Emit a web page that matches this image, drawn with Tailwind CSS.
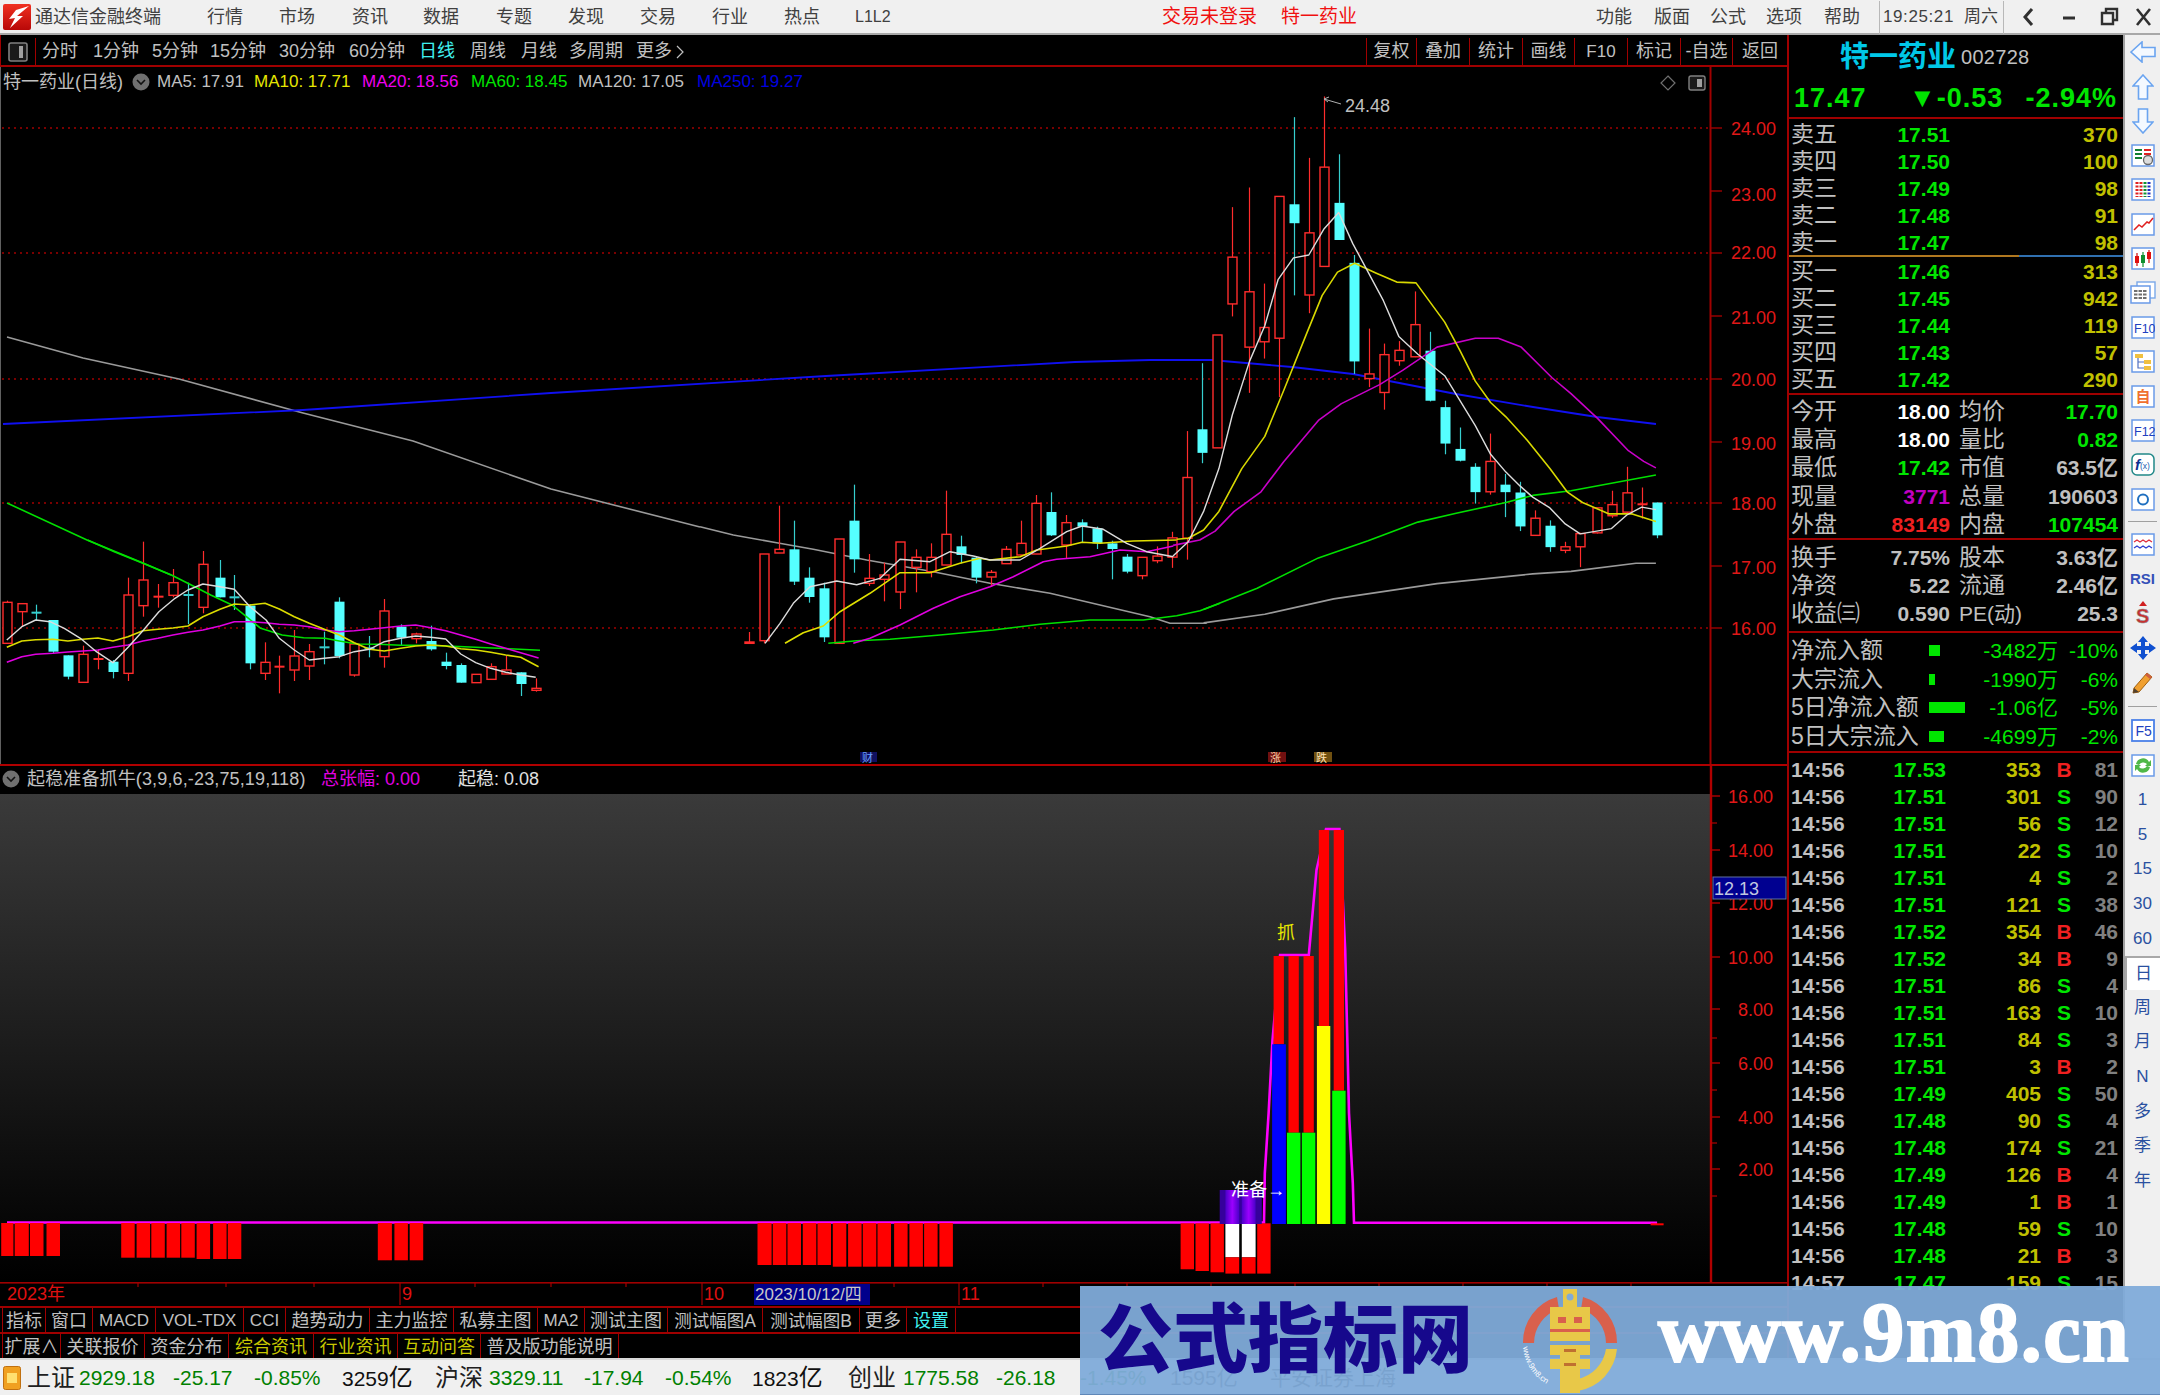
<!DOCTYPE html>
<html lang="zh">
<head>
<meta charset="utf-8">
<script src="https://cdn.jsdelivr.net/npm/@tailwindcss/browser@4"></script>
<title>通达信金融终端</title>
</head>
<body class="bg-black">
<div class="relative flex h-[1395px] w-[2160px] flex-col overflow-hidden bg-black text-[18px] text-[#c0c0c0] [font-family:'Liberation_Sans','Noto_Sans_CJK_SC',sans-serif]">

  <!-- menu bar -->
  <header class="flex h-[35px] shrink-0 items-center border-b-2 border-[#a8a8a8] bg-[#f0f0f0] pt-[1px] text-[18px] text-[#404040]">
    <svg class="ml-[3px] h-[26px] w-[28px] shrink-0" viewBox="0 0 28 26"><defs><linearGradient id="lg" x1="0" y1="0" x2="0" y2="1"><stop offset="0" stop-color="#f03020"/><stop offset="1" stop-color="#b80808"/></linearGradient></defs><rect width="28" height="26" rx="2" fill="url(#lg)"/><path d="M26 2 L13 6 L6 15 L12 14 L7 24 L20 12 L14 12 Z" fill="#fff"/></svg>
    <span class="ml-[4px] w-[172px] whitespace-nowrap">通达信金融终端</span>
    <span class="w-[72px]">行情</span><span class="w-[73px]">市场</span><span class="w-[71px]">资讯</span><span class="w-[73px]">数据</span><span class="w-[72px]">专题</span><span class="w-[72px]">发现</span><span class="w-[72px]">交易</span><span class="w-[72px]">行业</span><span class="w-[71px]">热点</span>
    <span class="w-[307px] text-[16px]">L1L2</span>
    <span class="w-[119px] whitespace-nowrap text-[19px] text-[#f01010]">交易未登录</span>
    <span class="w-[315px] whitespace-nowrap text-[19px] text-[#f01010]">特一药业</span>
    <span class="w-[58px]">功能</span><span class="w-[56px]">版面</span><span class="w-[56px]">公式</span><span class="w-[58px]">选项</span><span class="w-[55px]">帮助</span>
    <span class="flex h-[33px] w-[125px] items-center gap-[10px] border-x border-[#b8b8b8] pl-[3px] text-[17px]"><span class="tracking-[0.6px]">19:25:21</span><span class="whitespace-nowrap">周六</span></span>
    <svg class="ml-[16px] h-[22px] w-[132px] shrink-0" viewBox="0 0 132 22" fill="none" stroke="#303030" stroke-width="3"><path d="M12 3 L5 11 L12 19"/><path d="M43 12 H55" /><path d="M82 7 H93 V18 H82 Z M86 7 V3 H97 V14 H93" stroke-width="2.4"/><path d="M117 3 L130 19 M130 3 L117 19" stroke-width="2.6"/></svg>
  </header>

  <div class="flex min-h-0 flex-1">
    <!-- left column -->
    <div class="flex w-[1787px] shrink-0 flex-col">
      <!-- period toolbar -->
      <div class="flex h-[32px] shrink-0 items-center border-b-2 border-l border-[#a00000] pt-[3px]">
        <span class="flex h-full w-[35px] shrink-0 items-center justify-center border-r border-[#a00000]"><svg class="h-[20px] w-[20px]" viewBox="0 0 20 20"><rect x="1" y="1" width="18" height="18" rx="2" fill="#1a1a1a" stroke="#808080" stroke-width="1.6"/><rect x="11" y="4" width="4" height="12" fill="#a0a0a0"/></svg></span>
        <span class="ml-[6px] w-[51px] whitespace-nowrap">分时</span><span class="w-[59px] whitespace-nowrap">1分钟</span><span class="w-[58px] whitespace-nowrap">5分钟</span><span class="w-[69px] whitespace-nowrap">15分钟</span><span class="w-[70px] whitespace-nowrap">30分钟</span><span class="w-[70px] whitespace-nowrap">60分钟</span><span class="w-[51px] whitespace-nowrap text-[#40f0f0]">日线</span><span class="w-[51px] whitespace-nowrap">周线</span><span class="w-[48px] whitespace-nowrap">月线</span><span class="w-[67px] whitespace-nowrap">多周期</span><span class="flex w-[52px] items-center gap-[4px] whitespace-nowrap">更多<svg class="h-[14px] w-[8px]" viewBox="0 0 8 14" fill="none" stroke="#c0c0c0" stroke-width="1.2"><path d="M1 1 L7 7 L1 13"/></svg></span>
        <div class="ml-auto flex h-full text-center">
          <span class="flex w-[50px] items-center justify-center border-l border-[#a00000]">复权</span><span class="flex w-[53px] items-center justify-center border-l border-[#a00000]">叠加</span><span class="flex w-[53px] items-center justify-center border-l border-[#a00000]">统计</span><span class="flex w-[52px] items-center justify-center border-l border-[#a00000]">画线</span><span class="flex w-[53px] items-center justify-center border-l border-[#a00000] text-[17px]">F10</span><span class="flex w-[53px] items-center justify-center border-l border-[#a00000]">标记</span><span class="flex w-[52px] items-center justify-center border-l border-[#a00000]">-自选</span><span class="flex w-[55px] items-center justify-center border-l border-[#a00000]">返回</span>
        </div>
      </div>

      <!-- price chart -->
      <div class="relative h-[697px] shrink-0 border-l border-[#606060]">
        <svg id="main" class="absolute left-[-1px] top-0 h-[697px] w-[1787px]" viewBox="0 67 1787 697" font-size="18"></svg>
        <div class="absolute left-[2px] top-[4px] flex h-[22px] items-center whitespace-nowrap text-[17px]">
          <span class="w-[129px] text-[18px]">特一药业(日线)</span>
          <svg class="mr-[7px] h-[18px] w-[18px]" viewBox="0 0 18 18"><circle cx="9" cy="9" r="8.5" fill="#707070"/><path d="M5 7 L9 11 L13 7" fill="none" stroke="#111" stroke-width="1.6"/></svg>
          <span class="w-[97px]">MA5: 17.91</span><span class="w-[108px] text-[#e6e600]">MA10: 17.71</span><span class="w-[109px] text-[#f000f0]">MA20: 18.56</span><span class="w-[107px] text-[#00e600]">MA60: 18.45</span><span class="w-[119px]">MA120: 17.05</span><span class="w-[110px] text-[#0000e0]">MA250: 19.27</span>
        </div>
      </div>

      <!-- indicator title -->
      <div class="flex h-[30px] shrink-0 items-center border-t-2 border-[#b00000] pb-[2px] whitespace-nowrap">
        <svg class="ml-[2px] mr-[7px] h-[18px] w-[18px]" viewBox="0 0 18 18"><circle cx="9" cy="9" r="8.5" fill="#707070"/><path d="M5 7 L9 11 L13 7" fill="none" stroke="#111" stroke-width="1.6"/></svg>
        <span class="w-[294px] tracking-[0.14px]">起稳准备抓牛(3,9,6,-23,75,19,118)</span>
        <span class="w-[137px] text-[#e000e0]">总张幅: 0.00</span>
        <span class="text-[#e0e0e0]">起稳: 0.08</span>
      </div>

      <!-- indicator chart -->
      <div class="relative h-[488px] shrink-0">
        <div class="absolute left-0 top-0 h-full w-[1710px] bg-[linear-gradient(180deg,#3a3a3a_0%,#060606_88%,#000000_100%)]"></div>
        <svg id="sub" class="absolute left-0 top-0 h-[488px] w-[1787px] overflow-visible" viewBox="0 794 1787 488" font-size="18"></svg>
      </div>

      <!-- time axis -->
      <svg class="h-[24px] w-[1787px] shrink-0" viewBox="0 1282 1787 24" font-size="18">
        <rect x="0" y="1282" width="1787" height="1.6" fill="#a00000"/>
        <path d="M138 1283v4M226 1283v4M314 1283v4M400 1283v22M475 1283v4M551 1283v4M626 1283v4M702 1283v22M894 1283v4M959 1283v22M1043 1283v4M1127 1283v4M1211 1283v4M1295 1283v4M1379 1283v4M1463 1283v4M1547 1283v4M1631 1283v4" stroke="#a00000" stroke-width="1.2"/>
        <rect x="754" y="1284" width="116" height="21" fill="#00008c"/>
        <text x="7" y="1300" fill="#e01010">2023年</text>
        <text x="402" y="1300" fill="#e01010">9</text>
        <text x="704" y="1300" fill="#e01010">10</text>
        <text x="755" y="1300" fill="#c8c8c8" font-size="17">2023/10/12/四</text>
        <text x="961" y="1300" fill="#e01010">11</text>
      </svg>

      <!-- tabs -->
      <div class="flex h-[26px] shrink-0 border-t-2 border-[#a00000] pl-[2px] text-center whitespace-nowrap">
        <span class="w-[44px] border-x border-[#a00000]">指标</span><span class="w-[47px] border-r border-[#a00000]">窗口</span><span class="w-[63px] border-r border-[#a00000] text-[17px]">MACD</span><span class="w-[88px] border-r border-[#a00000] text-[17px]">VOL-TDX</span><span class="w-[42px] border-r border-[#a00000] text-[17px]">CCI</span><span class="w-[84px] border-r border-[#a00000]">趋势动力</span><span class="w-[84px] border-r border-[#a00000]">主力监控</span><span class="w-[84px] border-r border-[#a00000]">私募主图</span><span class="w-[47px] border-r border-[#a00000] text-[17px]">MA2</span><span class="w-[83px] border-r border-[#a00000]">测试主图</span><span class="w-[95px] border-r border-[#a00000] text-[17.5px]">测试幅图A</span><span class="w-[97px] border-r border-[#a00000] text-[17.5px]">测试幅图B</span><span class="w-[47px] border-r border-[#a00000]">更多</span><span class="w-[49px] border-r border-[#a00000] text-[#40f0f0]">设置</span>
      </div>
      <div class="flex h-[26px] shrink-0 border-t-2 border-[#a00000] pl-[2px] text-center whitespace-nowrap">
        <span class="w-[59px] border-x border-[#a00000]">扩展∧</span><span class="w-[84px] border-r border-[#a00000]">关联报价</span><span class="w-[84px] border-r border-[#a00000]">资金分布</span><span class="w-[85px] border-r border-[#a00000] text-[#c8c800]">综合资讯</span><span class="w-[84px] border-r border-[#a00000] text-[#c8c800]">行业资讯</span><span class="w-[83px] border-r border-[#a00000] text-[#c8c800]">互动问答</span><span class="w-[138px] border-r border-[#a00000]">普及版功能说明</span>
      </div>
    </div>

    <!-- quote panel -->
    <aside class="flex w-[336px] shrink-0 flex-col overflow-hidden border-l-2 border-[#a00000] text-[21px] font-bold leading-none text-[#c0c0c0]">
      <div class="flex h-[84px] shrink-0 flex-col border-b-2 border-[#a00000]">
        <div class="flex h-[44px] items-center pl-[51px]"><span class="w-[121px] whitespace-nowrap text-[29px] text-[#00c8e8]">特一药业</span><span class="text-[20px] font-normal tracking-[0.3px]">002728</span></div>
        <div class="flex h-[38px] items-center whitespace-nowrap text-[27px] tracking-[1px] text-[#00e600]"><span class="ml-[5px] w-[115px]">17.47</span><span class="w-[112px]">▼-0.53</span><span class="w-[96px] text-right">-2.94%</span></div>
      </div>

      <div class="h-[136px] shrink-0 pt-[2px]">
        <div class="flex h-[27px] items-center pl-[2px] pr-[5px]"><span class="w-[80px] text-[23px] font-normal">卖五</span><span class="w-[79px] text-right text-[#00e600]">17.51</span><span class="flex-1 text-right text-[#c0c000]">370</span></div>
        <div class="flex h-[27px] items-center pl-[2px] pr-[5px]"><span class="w-[80px] text-[23px] font-normal">卖四</span><span class="w-[79px] text-right text-[#00e600]">17.50</span><span class="flex-1 text-right text-[#c0c000]">100</span></div>
        <div class="flex h-[27px] items-center pl-[2px] pr-[5px]"><span class="w-[80px] text-[23px] font-normal">卖三</span><span class="w-[79px] text-right text-[#00e600]">17.49</span><span class="flex-1 text-right text-[#c0c000]">98</span></div>
        <div class="flex h-[27px] items-center pl-[2px] pr-[5px]"><span class="w-[80px] text-[23px] font-normal">卖二</span><span class="w-[79px] text-right text-[#00e600]">17.48</span><span class="flex-1 text-right text-[#c0c000]">91</span></div>
        <div class="flex h-[27px] items-center pl-[2px] pr-[5px]"><span class="w-[80px] text-[23px] font-normal">卖一</span><span class="w-[79px] text-right text-[#00e600]">17.47</span><span class="flex-1 text-right text-[#c0c000]">98</span></div>
      </div>
      <div class="flex h-[2px] shrink-0"><span class="w-[230px] bg-[#b07820]"></span><span class="flex-1 bg-[#3070b0]"></span></div>
      <div class="h-[138px] shrink-0 border-b-2 border-[#a00000] pt-[1px]">
        <div class="flex h-[27px] items-center pl-[2px] pr-[5px]"><span class="w-[80px] text-[23px] font-normal">买一</span><span class="w-[79px] text-right text-[#00e600]">17.46</span><span class="flex-1 text-right text-[#c0c000]">313</span></div>
        <div class="flex h-[27px] items-center pl-[2px] pr-[5px]"><span class="w-[80px] text-[23px] font-normal">买二</span><span class="w-[79px] text-right text-[#00e600]">17.45</span><span class="flex-1 text-right text-[#c0c000]">942</span></div>
        <div class="flex h-[27px] items-center pl-[2px] pr-[5px]"><span class="w-[80px] text-[23px] font-normal">买三</span><span class="w-[79px] text-right text-[#00e600]">17.44</span><span class="flex-1 text-right text-[#c0c000]">119</span></div>
        <div class="flex h-[27px] items-center pl-[2px] pr-[5px]"><span class="w-[80px] text-[23px] font-normal">买四</span><span class="w-[79px] text-right text-[#00e600]">17.43</span><span class="flex-1 text-right text-[#c0c000]">57</span></div>
        <div class="flex h-[27px] items-center pl-[2px] pr-[5px]"><span class="w-[80px] text-[23px] font-normal">买五</span><span class="w-[79px] text-right text-[#00e600]">17.42</span><span class="flex-1 text-right text-[#c0c000]">290</span></div>
      </div>

      <div class="h-[145px] shrink-0 border-b-2 border-[#a00000] pt-[2px]">
        <div class="flex h-[28.4px] items-center pl-[2px] pr-[5px]"><span class="w-[80px] text-[23px] font-normal">今开</span><span class="w-[79px] text-right text-white">18.00</span><span class="ml-[9px] text-[23px] font-normal">均价</span><span class="flex-1 text-right text-[#00e600]">17.70</span></div>
        <div class="flex h-[28.4px] items-center pl-[2px] pr-[5px]"><span class="w-[80px] text-[23px] font-normal">最高</span><span class="w-[79px] text-right text-white">18.00</span><span class="ml-[9px] text-[23px] font-normal">量比</span><span class="flex-1 text-right text-[#00e600]">0.82</span></div>
        <div class="flex h-[28.4px] items-center pl-[2px] pr-[5px]"><span class="w-[80px] text-[23px] font-normal">最低</span><span class="w-[79px] text-right text-[#00e600]">17.42</span><span class="ml-[9px] text-[23px] font-normal">市值</span><span class="flex-1 text-right">63.5亿</span></div>
        <div class="flex h-[28.4px] items-center pl-[2px] pr-[5px]"><span class="w-[80px] text-[23px] font-normal">现量</span><span class="w-[79px] text-right text-[#c000c0]">3771</span><span class="ml-[9px] text-[23px] font-normal">总量</span><span class="flex-1 text-right">190603</span></div>
        <div class="flex h-[28.4px] items-center pl-[2px] pr-[5px]"><span class="w-[80px] text-[23px] font-normal">外盘</span><span class="w-[79px] text-right text-[#f02020]">83149</span><span class="ml-[9px] text-[23px] font-normal">内盘</span><span class="flex-1 text-right text-[#00e600]">107454</span></div>
      </div>

      <div class="h-[93px] shrink-0 border-b-2 border-[#a00000] pt-[3px]">
        <div class="flex h-[28.4px] items-center pl-[2px] pr-[5px]"><span class="w-[80px] text-[23px] font-normal">换手</span><span class="w-[79px] text-right">7.75%</span><span class="ml-[9px] text-[23px] font-normal">股本</span><span class="flex-1 text-right">3.63亿</span></div>
        <div class="flex h-[28.4px] items-center pl-[2px] pr-[5px]"><span class="w-[80px] text-[23px] font-normal">净资</span><span class="w-[79px] text-right">5.22</span><span class="ml-[9px] text-[23px] font-normal">流通</span><span class="flex-1 text-right">2.46亿</span></div>
        <div class="flex h-[28.4px] items-center pl-[2px] pr-[5px]"><span class="w-[80px] whitespace-nowrap text-[23px] font-normal">收益㈢</span><span class="w-[79px] text-right">0.590</span><span class="ml-[9px] whitespace-nowrap font-normal">PE(动)</span><span class="flex-1 text-right">25.3</span></div>
      </div>

      <div class="h-[120px] shrink-0 border-b-2 border-[#a00000] pt-[3px] whitespace-nowrap">
        <div class="flex h-[28.7px] items-center pl-[2px] pr-[5px]"><span class="w-[138px] text-[23px] font-normal">净流入额</span><span class="w-[50px]"><span class="block h-[11px] w-[11px] bg-[#00e600]"></span></span><span class="w-[79px] text-right font-normal text-[#00e600]">-3482万</span><span class="flex-1 text-right font-normal text-[#00e600]">-10%</span></div>
        <div class="flex h-[28.7px] items-center pl-[2px] pr-[5px]"><span class="w-[138px] text-[23px] font-normal">大宗流入</span><span class="w-[50px]"><span class="block h-[11px] w-[6px] bg-[#00e600]"></span></span><span class="w-[79px] text-right font-normal text-[#00e600]">-1990万</span><span class="flex-1 text-right font-normal text-[#00e600]">-6%</span></div>
        <div class="flex h-[28.7px] items-center pl-[2px] pr-[5px]"><span class="w-[138px] text-[23px] font-normal">5日净流入额</span><span class="w-[50px]"><span class="block h-[11px] w-[36px] bg-[#00e600]"></span></span><span class="w-[79px] text-right font-normal text-[#00e600]">-1.06亿</span><span class="flex-1 text-right font-normal text-[#00e600]">-5%</span></div>
        <div class="flex h-[28.7px] items-center pl-[2px] pr-[5px]"><span class="w-[138px] text-[23px] font-normal">5日大宗流入</span><span class="w-[50px]"><span class="block h-[11px] w-[15px] bg-[#00e600]"></span></span><span class="w-[79px] text-right font-normal text-[#00e600]">-4699万</span><span class="flex-1 text-right font-normal text-[#00e600]">-2%</span></div>
      </div>

      <div class="pl-[2px] pr-[5px] pt-[3px]">
        <div class="flex h-[27px] items-center"><span class="w-[80px]">14:56</span><span class="w-[75px] text-right text-[#00e600]">17.53</span><span class="w-[95px] text-right text-[#c0c000]">353</span><span class="w-[46px] text-center text-[#f02020]">B</span><span class="flex-1 text-right text-[#808080]">81</span></div>
        <div class="flex h-[27px] items-center"><span class="w-[80px]">14:56</span><span class="w-[75px] text-right text-[#00e600]">17.51</span><span class="w-[95px] text-right text-[#c0c000]">301</span><span class="w-[46px] text-center text-[#00e600]">S</span><span class="flex-1 text-right text-[#808080]">90</span></div>
        <div class="flex h-[27px] items-center"><span class="w-[80px]">14:56</span><span class="w-[75px] text-right text-[#00e600]">17.51</span><span class="w-[95px] text-right text-[#c0c000]">56</span><span class="w-[46px] text-center text-[#00e600]">S</span><span class="flex-1 text-right text-[#808080]">12</span></div>
        <div class="flex h-[27px] items-center"><span class="w-[80px]">14:56</span><span class="w-[75px] text-right text-[#00e600]">17.51</span><span class="w-[95px] text-right text-[#c0c000]">22</span><span class="w-[46px] text-center text-[#00e600]">S</span><span class="flex-1 text-right text-[#808080]">10</span></div>
        <div class="flex h-[27px] items-center"><span class="w-[80px]">14:56</span><span class="w-[75px] text-right text-[#00e600]">17.51</span><span class="w-[95px] text-right text-[#c0c000]">4</span><span class="w-[46px] text-center text-[#00e600]">S</span><span class="flex-1 text-right text-[#808080]">2</span></div>
        <div class="flex h-[27px] items-center"><span class="w-[80px]">14:56</span><span class="w-[75px] text-right text-[#00e600]">17.51</span><span class="w-[95px] text-right text-[#c0c000]">121</span><span class="w-[46px] text-center text-[#00e600]">S</span><span class="flex-1 text-right text-[#808080]">38</span></div>
        <div class="flex h-[27px] items-center"><span class="w-[80px]">14:56</span><span class="w-[75px] text-right text-[#00e600]">17.52</span><span class="w-[95px] text-right text-[#c0c000]">354</span><span class="w-[46px] text-center text-[#f02020]">B</span><span class="flex-1 text-right text-[#808080]">46</span></div>
        <div class="flex h-[27px] items-center"><span class="w-[80px]">14:56</span><span class="w-[75px] text-right text-[#00e600]">17.52</span><span class="w-[95px] text-right text-[#c0c000]">34</span><span class="w-[46px] text-center text-[#f02020]">B</span><span class="flex-1 text-right text-[#808080]">9</span></div>
        <div class="flex h-[27px] items-center"><span class="w-[80px]">14:56</span><span class="w-[75px] text-right text-[#00e600]">17.51</span><span class="w-[95px] text-right text-[#c0c000]">86</span><span class="w-[46px] text-center text-[#00e600]">S</span><span class="flex-1 text-right text-[#808080]">4</span></div>
        <div class="flex h-[27px] items-center"><span class="w-[80px]">14:56</span><span class="w-[75px] text-right text-[#00e600]">17.51</span><span class="w-[95px] text-right text-[#c0c000]">163</span><span class="w-[46px] text-center text-[#00e600]">S</span><span class="flex-1 text-right text-[#808080]">10</span></div>
        <div class="flex h-[27px] items-center"><span class="w-[80px]">14:56</span><span class="w-[75px] text-right text-[#00e600]">17.51</span><span class="w-[95px] text-right text-[#c0c000]">84</span><span class="w-[46px] text-center text-[#00e600]">S</span><span class="flex-1 text-right text-[#808080]">3</span></div>
        <div class="flex h-[27px] items-center"><span class="w-[80px]">14:56</span><span class="w-[75px] text-right text-[#00e600]">17.51</span><span class="w-[95px] text-right text-[#c0c000]">3</span><span class="w-[46px] text-center text-[#f02020]">B</span><span class="flex-1 text-right text-[#808080]">2</span></div>
        <div class="flex h-[27px] items-center"><span class="w-[80px]">14:56</span><span class="w-[75px] text-right text-[#00e600]">17.49</span><span class="w-[95px] text-right text-[#c0c000]">405</span><span class="w-[46px] text-center text-[#00e600]">S</span><span class="flex-1 text-right text-[#808080]">50</span></div>
        <div class="flex h-[27px] items-center"><span class="w-[80px]">14:56</span><span class="w-[75px] text-right text-[#00e600]">17.48</span><span class="w-[95px] text-right text-[#c0c000]">90</span><span class="w-[46px] text-center text-[#00e600]">S</span><span class="flex-1 text-right text-[#808080]">4</span></div>
        <div class="flex h-[27px] items-center"><span class="w-[80px]">14:56</span><span class="w-[75px] text-right text-[#00e600]">17.48</span><span class="w-[95px] text-right text-[#c0c000]">174</span><span class="w-[46px] text-center text-[#00e600]">S</span><span class="flex-1 text-right text-[#808080]">21</span></div>
        <div class="flex h-[27px] items-center"><span class="w-[80px]">14:56</span><span class="w-[75px] text-right text-[#00e600]">17.49</span><span class="w-[95px] text-right text-[#c0c000]">126</span><span class="w-[46px] text-center text-[#f02020]">B</span><span class="flex-1 text-right text-[#808080]">4</span></div>
        <div class="flex h-[27px] items-center"><span class="w-[80px]">14:56</span><span class="w-[75px] text-right text-[#00e600]">17.49</span><span class="w-[95px] text-right text-[#c0c000]">1</span><span class="w-[46px] text-center text-[#f02020]">B</span><span class="flex-1 text-right text-[#808080]">1</span></div>
        <div class="flex h-[27px] items-center"><span class="w-[80px]">14:56</span><span class="w-[75px] text-right text-[#00e600]">17.48</span><span class="w-[95px] text-right text-[#c0c000]">59</span><span class="w-[46px] text-center text-[#00e600]">S</span><span class="flex-1 text-right text-[#808080]">10</span></div>
        <div class="flex h-[27px] items-center"><span class="w-[80px]">14:56</span><span class="w-[75px] text-right text-[#00e600]">17.48</span><span class="w-[95px] text-right text-[#c0c000]">21</span><span class="w-[46px] text-center text-[#f02020]">B</span><span class="flex-1 text-right text-[#808080]">3</span></div>
        <div class="flex h-[27px] items-center"><span class="w-[80px]">14:57</span><span class="w-[75px] text-right text-[#00e600]">17.47</span><span class="w-[95px] text-right text-[#c0c000]">159</span><span class="w-[46px] text-center text-[#00e600]">S</span><span class="flex-1 text-right text-[#808080]">15</span></div>
      </div>
    </aside>

    <!-- icon rail -->
    <nav class="flex w-[37px] shrink-0 flex-col items-center border-l-2 border-[#a0a0a0] bg-[#f0f0f0] text-[#2a50a0]">
      <span class="flex h-[34.4px] items-center"><svg class="h-[22px] w-[26px]" viewBox="0 0 26 22"><path d="M1 11 L12 1 V6.5 H25 V15.5 H12 V21 Z" fill="#f4f9ff" stroke="#6aa4f0" stroke-width="1.6"/></svg></span>
      <span class="flex h-[34.4px] items-center"><svg class="h-[26px] w-[22px]" viewBox="0 0 22 26"><path d="M11 1 L21 12 H15.5 V25 H6.5 V12 H1 Z" fill="#f4f9ff" stroke="#6aa4f0" stroke-width="1.6"/></svg></span>
      <span class="flex h-[34.4px] items-center"><svg class="h-[26px] w-[22px]" viewBox="0 0 22 26"><path d="M11 25 L21 14 H15.5 V1 H6.5 V14 H1 Z" fill="#f4f9ff" stroke="#6aa4f0" stroke-width="1.6"/></svg></span>
      <span class="flex h-[34.4px] items-center"><svg class="h-[23px] w-[24px]" viewBox="0 0 24 23"><rect x="1" y="1" width="22" height="21" fill="#fff" stroke="#6a9ae8" stroke-width="1.5"/><path d="M4 6h7M4 10h7M4 14h7" stroke="#108030" stroke-width="2"/><path d="M13 6h7M13 10h7" stroke="#e02020" stroke-width="2"/><circle cx="17" cy="16" r="4.5" fill="#ddd" stroke="#666" stroke-width="1.3"/></svg></span>
      <span class="flex h-[34.4px] items-center"><svg class="h-[23px] w-[24px]" viewBox="0 0 24 23"><rect x="1" y="1" width="22" height="21" fill="#fff" stroke="#6a9ae8" stroke-width="1.5"/><path d="M6 4v15" stroke="#e02020" stroke-width="3" stroke-dasharray="2 1.5"/><path d="M10 4v15" stroke="#e02020" stroke-width="3" stroke-dasharray="2 1.5"/><path d="M14 4v15" stroke="#109030" stroke-width="3" stroke-dasharray="2 1.5"/><path d="M18 4v15" stroke="#2030c0" stroke-width="3" stroke-dasharray="2 1.5"/></svg></span>
      <span class="flex h-[34.4px] items-center"><svg class="h-[23px] w-[24px]" viewBox="0 0 24 23"><rect x="1" y="1" width="22" height="21" fill="#fff" stroke="#6a9ae8" stroke-width="1.5"/><path d="M3 17 L8 12 L11 14 L16 9 L18 10 L22 5" fill="none" stroke="#e02020" stroke-width="1.5"/></svg></span>
      <span class="flex h-[34.4px] items-center"><svg class="h-[23px] w-[24px]" viewBox="0 0 24 23"><rect x="1" y="1" width="22" height="21" fill="#fff" stroke="#6a9ae8" stroke-width="1.5"/><path d="M6 6v13M18 3v13" stroke="#d01010" stroke-width="1.2"/><path d="M12 5v15" stroke="#109030" stroke-width="1.2"/><rect x="4" y="9" width="4" height="7" fill="#e01010"/><rect x="10" y="8" width="4" height="8" fill="#109030"/><rect x="16" y="5" width="4" height="7" fill="#e01010"/></svg></span>
      <span class="flex h-[34.4px] items-center"><svg class="h-[23px] w-[26px]" viewBox="0 0 26 23"><rect x="7" y="1" width="18" height="16" fill="#fff" stroke="#7aa8e8" stroke-width="1.4"/><rect x="1" y="5" width="19" height="17" fill="#fff" stroke="#6a9ae8" stroke-width="1.5"/><path d="M4 10h13M4 13.5h13M4 17h13" stroke="#707070" stroke-width="2" stroke-dasharray="3.5 1"/></svg></span>
      <span class="flex h-[34.4px] items-center"><svg class="h-[23px] w-[24px]" viewBox="0 0 24 23" font-size="12.5"><rect x="1" y="1" width="22" height="21" fill="#fff" stroke="#6a9ae8" stroke-width="1.5"/><text x="3" y="16.5" fill="#2040c0">F10</text></svg></span>
      <span class="flex h-[34.4px] items-center"><svg class="h-[23px] w-[24px]" viewBox="0 0 24 23"><rect x="1" y="1" width="22" height="21" fill="#fff" stroke="#6a9ae8" stroke-width="1.5"/><path d="M7 7V18H14M7 12H14" fill="none" stroke="#5070c0" stroke-width="1.2"/><rect x="4" y="4" width="8" height="4" fill="#f0c040"/><rect x="13" y="10" width="7" height="4" fill="#f0c040"/><rect x="13" y="16" width="7" height="4" fill="#f0c040"/></svg></span>
      <span class="flex h-[34.4px] items-center"><svg class="h-[23px] w-[24px]" viewBox="0 0 24 23" font-size="15"><rect x="1" y="1" width="22" height="21" fill="#fff" stroke="#6a9ae8" stroke-width="1.5"/><text x="4.5" y="17" fill="#f07030" font-weight="700">自</text></svg></span>
      <span class="flex h-[34.4px] items-center"><svg class="h-[23px] w-[24px]" viewBox="0 0 24 23" font-size="12.5"><rect x="1" y="1" width="22" height="21" fill="#fff" stroke="#6a9ae8" stroke-width="1.5"/><text x="3" y="16.5" fill="#2040c0">F12</text></svg></span>
      <span class="flex h-[34.4px] items-center"><svg class="h-[23px] w-[24px]" viewBox="0 0 24 23"><rect x="1" y="1" width="22" height="21" rx="5" fill="#fff" stroke="#208888" stroke-width="1.5"/><text x="4" y="17" font-size="15" font-style="italic" font-weight="700" fill="#103090">f</text><text x="9" y="15.5" font-size="8.5" fill="#2060b0">(x)</text></svg></span>
      <span class="flex h-[34.4px] items-center"><svg class="h-[23px] w-[24px]" viewBox="0 0 24 23"><rect x="1" y="1" width="22" height="21" fill="#fff" stroke="#6a9ae8" stroke-width="1.5"/><circle cx="12" cy="11.5" r="5" fill="none" stroke="#2070c0" stroke-width="2"/></svg></span>
      <span class="flex h-[11px] w-full items-center px-[3px]"><span class="h-[1px] w-full bg-[#a0a0a0]"></span></span>
      <span class="flex h-[34.4px] items-center"><svg class="h-[23px] w-[24px]" viewBox="0 0 24 23"><rect x="1" y="1" width="22" height="21" fill="#fff" stroke="#6a9ae8" stroke-width="1.5"/><path d="M3 9 L6 7 L9 9 L12 7 L15 9 L18 7 L21 9" fill="none" stroke="#e03040" stroke-width="1.4"/><path d="M3 15 L6 13 L9 15 L12 13 L15 15 L18 13 L21 15" fill="none" stroke="#3040d0" stroke-width="1.4"/></svg></span>
      <span class="flex h-[34.4px] items-center text-[15px] font-bold text-[#3450b8]">RSI</span>
      <span class="flex h-[34.4px] items-center"><svg class="h-[26px] w-[22px]" viewBox="0 0 22 26"><text x="4" y="23" font-size="20" font-weight="700" fill="#c83030" stroke="#909090" stroke-width="0.5">S</text><path d="M11 1 L15 6 H7 Z" fill="#d02020"/></svg></span>
      <span class="flex h-[34.4px] items-center"><svg class="h-[24px] w-[26px]" viewBox="0 0 26 24" fill="#1050d0"><path d="M13 0 L18 6 H8 Z M13 24 L18 18 H8 Z M0 12 L7 7 V17 Z M26 12 L19 7 V17 Z"/><rect x="7" y="10" width="12" height="4"/><rect x="11" y="6" width="4" height="12"/></svg></span>
      <span class="flex h-[34.4px] items-center"><svg class="h-[24px] w-[24px]" viewBox="0 0 24 24"><path d="M3 18 L16 3 L21 7 L8 22 L2 23 Z" fill="#f0a030" stroke="#a06010" stroke-width="1"/><path d="M16 3 L21 7 L19 9 L14 5 Z" fill="#d06040"/><path d="M2 23 L3 18 L8 22 Z" fill="#504030"/></svg></span>
      <span class="flex h-[14px] w-full items-center px-[3px]"><span class="h-[1px] w-full bg-[#a0a0a0]"></span></span>
      <span class="flex h-[34.6px] items-center"><svg class="h-[23px] w-[24px]" viewBox="0 0 24 23" font-size="14"><rect x="1" y="1" width="22" height="21" fill="#fff" stroke="#4a80e8" stroke-width="1.8"/><text x="4.5" y="16.5" fill="#2040c0">F5</text></svg></span>
      <span class="flex h-[34.6px] items-center"><svg class="h-[23px] w-[24px]" viewBox="0 0 24 23"><rect x="1" y="1" width="22" height="21" fill="#fff" stroke="#6a9ae8" stroke-width="1.5"/><path d="M5 10 A7 7 0 0 1 18 8 L20 6 V12 H14 L16 10 A5 5 0 0 0 8 11 Z" fill="#50b848"/><path d="M19 13 A7 7 0 0 1 6 15 L4 17 V11 H10 L8 13 A5 5 0 0 0 16 12 Z" fill="#50b848"/></svg></span>
      <span class="flex h-[34.6px] items-center text-[17px]">1</span>
      <span class="flex h-[34.6px] items-center text-[17px]">5</span>
      <span class="flex h-[34.6px] items-center text-[17px]">15</span>
      <span class="flex h-[34.6px] items-center text-[17px]">30</span>
      <span class="flex h-[34.6px] items-center text-[17px]">60</span>
      <span class="flex h-[34.6px] w-full items-center justify-center border-l-2 border-t-2 border-[#a8a8a8] bg-white text-[17px]">日</span>
      <span class="flex h-[34.6px] items-center text-[17px]">周</span>
      <span class="flex h-[34.6px] items-center text-[17px]">月</span>
      <span class="flex h-[34.6px] items-center text-[17px]">N</span>
      <span class="flex h-[34.6px] items-center text-[17px]">多</span>
      <span class="flex h-[34.6px] items-center text-[17px]">季</span>
      <span class="flex h-[34.6px] items-center text-[17px]">年</span>
    </nav>
  </div>

  <!-- status bar -->
  <footer class="flex h-[37px] shrink-0 items-center whitespace-nowrap border-t-2 border-[#d8d8d8] bg-[#f0f0f0] text-[21px] text-[#008000]">
    <svg class="ml-[3px] mr-[6px] h-[24px] w-[18px] shrink-0" viewBox="0 0 18 24"><rect x="0.5" y="0.5" width="17" height="23" rx="2" fill="#f0a020" stroke="#c07010"/><rect x="4" y="7" width="10" height="10" fill="#ffe070"/></svg>
    <span class="w-[52px] text-[24px] text-[#202020]">上证</span><span class="w-[94px]">2929.18</span><span class="w-[81px]">-25.17</span><span class="w-[88px]">-0.85%</span><span class="w-[93px] text-[#101010]">3259<span class="text-[24px]">亿</span></span>
    <span class="w-[54px] text-[24px] text-[#202020]">沪深</span><span class="w-[95px]">3329.11</span><span class="w-[81px]">-17.94</span><span class="w-[87px]">-0.54%</span><span class="w-[96px] text-[#101010]">1823<span class="text-[24px]">亿</span></span>
    <span class="w-[55px] text-[24px] text-[#202020]">创业</span><span class="w-[93px]">1775.58</span><span class="w-[84px]">-26.18</span><span class="w-[90px]">-1.45%</span><span class="w-[100px] text-[#101010]">1595亿</span><span class="text-[#101010]">平安证券上海</span>
  </footer>

  <!-- site watermark over the lower right corner -->
  <div class="absolute bottom-0 right-0 flex h-[109px] w-[1080px] items-center border-b border-[#6088b8] bg-[#80abd9]/95">
    <span class="ml-[18px] w-[416px] shrink-0 whitespace-nowrap text-[75px] font-black leading-none text-[#16088c]">公式指标网</span>
    <svg class="h-[107px] w-[112px] shrink-0" viewBox="0 0 112 107">
      <path d="M9 56 A47 47 0 0 1 43 10 L45 22 A36 36 0 0 0 20 56 Z" fill="#d9604c"/>
      <path d="M103 56 A47 47 0 0 0 69 10 L67 22 A36 36 0 0 1 92 56 Z" fill="#d9604c"/>
      <path d="M103 62 A47 47 0 0 1 64 104 L63 92 A36 36 0 0 0 92 62 Z" fill="#e8c848"/>
      <rect x="49" y="2" width="14" height="18" fill="#e8c848"/><circle cx="56" cy="10" r="3.5" fill="#80abd9"/>
      <rect x="36" y="20" width="40" height="34" fill="#e8c848"/>
      <rect x="44" y="30" width="8" height="6" fill="#d9604c"/><rect x="60" y="30" width="8" height="6" fill="#d9604c"/><rect x="36" y="42" width="40" height="3" fill="#d9604c"/>
      <rect x="36" y="58" width="40" height="10" fill="#e8c848"/><rect x="36" y="72" width="40" height="10" fill="#e8c848"/><rect x="46" y="58" width="20" height="48" fill="#e8c848"/>
      <rect x="50" y="62" width="12" height="3" fill="#c07030"/><rect x="50" y="76" width="12" height="3" fill="#c07030"/>
      <path id="arc" d="M9 60 A47 47 0 0 0 46 102" fill="none"/>
      <text font-size="8" fill="#ffffff"><textPath href="#arc">www.9m8.cn</textPath></text>
    </svg>
    <span class="ml-[32px] whitespace-nowrap pb-[14px] text-[84px] font-bold leading-none tracking-[1.5px] text-white [font-family:'Liberation_Serif',serif] [-webkit-text-stroke:2px_white]">www.9m8.cn</span>
  </div>
</div>

<script>
var z7=function(p){return [1150+p[0]/2.613,90+p[1]/2.8];};
var z9=function(p){return [700+p[0]/3,480+p[1]/3];};
var z10=function(p){return [p[0]/2.8,540+p[1]/3];};
var z8=function(p){return [1150+p[0]/2.613,780+p[1]/3];};
var z12=function(p){return [p[0]/1.633,1205+p[1]/3];};
function pts(a,f){return a.map(function(p){var q=f(p);return q[0].toFixed(1)+','+q[1].toFixed(1);}).join(' ');}
var RED='#ff2c2c',CY='#55ffff',CW='#36cfcf';
function candles(list,f){
  var s='';
  list.forEach(function(c){
    var x=c[0],wt=c[1],bt=c[2],bb=c[3],wb=c[4],t=c[5];
    var a=f([x,wt]),b=f([x,bt]),d=f([x,bb]),e=f([x,wb]);
    var X=Math.round(a[0])+0.5;
    s+='<line x1="'+X+'" x2="'+X+'" y1="'+a[1]+'" y2="'+e[1]+'" stroke="'+(t=='r'?RED:CW)+'" stroke-width="1.2"/>';
    if(bb-bt<2){s+='<rect x="'+(X-5)+'" y="'+(b[1]-1)+'" width="10" height="2" fill="'+(t=='r'?RED:CW)+'"/>';}
    else if(t=='r'){s+='<rect x="'+(X-4.5)+'" y="'+b[1]+'" width="9" height="'+(d[1]-b[1])+'" fill="#000" stroke="'+RED+'" stroke-width="1.4"/>';}
    else{s+='<rect x="'+(X-5)+'" y="'+b[1]+'" width="10" height="'+(d[1]-b[1])+'" fill="'+CY+'"/>';}
  });
  return s;
}
function line(a,f,c,w){return '<polyline points="'+pts(a,f)+'" fill="none" stroke="'+c+'" stroke-width="'+(w||1.4)+'" stroke-linejoin="round"/>';}

var left=[[19,182,187,310,310,'r'],[61,191,191,215,258,'r'],[102,194,218,218,242,'c'],[148,240,240,335,340,'c'],[190,346,346,410,418,'c'],[232,317,343,427,427,'r'],[274,330,357,357,388,'r'],[316,360,365,396,415,'c'],[358,113,165,400,423,'r'],[400,5,120,197,230,'r'],[442,132,170,170,203,'r'],[484,87,128,166,172,'r'],[526,128,165,165,252,'c'],[568,33,73,202,220,'r'],[616,60,113,172,172,'c'],[656,105,172,172,210,'c'],[700,192,197,370,388,'c'],[742,307,367,400,420,'r'],[782,347,380,380,460,'r'],[824,270,348,390,423,'r'],[866,312,335,378,420,'r'],[908,275,322,322,373,'c'],[950,172,185,348,355,'c'],[992,312,312,405,410,'r'],[1034,288,325,325,352,'c'],[1076,177,213,350,383,'r'],[1122,253,260,293,315,'c'],[1164,278,282,296,310,'r'],[1206,257,303,328,332,'c'],[1248,338,365,378,388,'c'],[1290,370,375,428,428,'c'],[1332,403,403,428,428,'r'],[1374,370,380,418,418,'r'],[1416,347,390,402,402,'r'],[1458,397,397,432,468,'c'],[1500,415,445,451,455,'r']];
var mid=[[147,456,486,490,490,'r'],[192,222,222,482,490,'r'],[237,77,208,219,219,'r'],[282,122,208,305,315,'c'],[327,262,293,351,368,'c'],[372,308,325,472,486,'c'],[417,177,177,490,490,'r'],[462,14,122,238,278,'c'],[507,222,295,310,318,'r'],[552,248,285,298,364,'r'],[601,186,186,336,387,'r'],[647,208,232,262,337,'r'],[692,190,232,275,292,'r'],[737,32,163,255,255,'r'],[782,167,199,225,250,'c'],[827,230,233,293,310,'c'],[872,270,277,291,320,'r'],[917,198,208,251,252,'r'],[962,122,190,225,225,'r'],[1007,45,70,222,222,'r'],[1052,37,96,166,168,'c'],[1097,105,128,195,235,'r'],[1146,118,127,140,188,'c'],[1191,140,145,190,207,'c'],[1236,182,190,207,298,'c'],[1281,222,230,275,280,'c'],[1326,232,232,287,298,'r']];
var right=[[19,1278,1305,1318,1325,'r'],[58,1237,1254,1308,1338,'r'],[97,955,1085,1255,1315,'r'],[137,765,950,1016,1045,'c'],[176,686,686,1002,1002,'r'],[215,328,468,599,634,'r'],[258,273,565,720,848,'r'],[297,542,665,705,752,'r'],[336,298,298,695,860,'r'],[375,76,320,373,575,'c'],[415,190,400,574,625,'r'],[454,18,216,494,494,'r'],[493,180,316,420,420,'c'],[533,462,484,760,795,'c'],[572,668,795,808,832,'r'],[611,710,741,847,895,'r'],[650,703,729,758,772,'r'],[693,564,657,747,748,'r'],[732,677,730,870,872,'c'],[771,870,888,990,1020,'c'],[811,945,1005,1038,1040,'c'],[850,1045,1055,1126,1158,'c'],[889,962,1040,1125,1133,'r'],[928,1075,1105,1126,1196,'c'],[968,1097,1127,1222,1235,'c'],[1007,1177,1199,1247,1247,'r'],[1046,1205,1220,1280,1293,'c'],[1085,1265,1279,1289,1297,'r'],[1124,1240,1242,1279,1336,'r'],[1167,1170,1170,1240,1242,'r'],[1206,1122,1161,1192,1198,'r'],[1246,1055,1128,1182,1190,'r'],[1285,1113,1160,1160,1200,'r'],[1324,1155,1155,1247,1255,'c']];

var m='';
[128,253,379,503,628].forEach(function(y){m+='<line x1="2" x2="1710" y1="'+y+'" y2="'+y+'" stroke="#a00000" stroke-width="1.4" stroke-dasharray="2 4"/>';});
m+='<line x1="1710.5" x2="1710.5" y1="67" y2="764" stroke="#a00000" stroke-width="2"/>';
[['24.00',128,128],['23.00',191,194],['22.00',253,252],['21.00',316,317],['20.00',379,379],['19.00',442,443],['18.00',503,503],['17.00',566,567],['16.00',628,628]].forEach(function(a){
  m+='<line x1="1711" x2="1722" y1="'+a[1]+'" y2="'+a[1]+'" stroke="#a00000" stroke-width="1.4"/>';
  m+='<text x="1731" y="'+(a[2]+7)+'" fill="#e01818">'+a[0]+'</text>';
});
/* MA120 */
m+=line([[7,337],[83,358],[179,379],[303,413],[413,441],[551,489],[700,527]],function(p){return p;},'#9a9a9a',1.6);
m+=line([[0,140],[100,165],[230,188],[340,208],[500,240],[700,275],[870,310],[1050,340],[1200,375],[1350,410],[1410,430],[1520,430]],z9,'#9a9a9a',1.6);
m+=line([[140,1492],[300,1468],[480,1425],[750,1382],[1000,1355],[1100,1348],[1270,1325],[1322,1325]],z7,'#9a9a9a',1.6);
/* MA250 */
m+=line([[3,424],[303,410],[551,393],[826,376],[1075,362],[1150,360],[1211,360],[1292,367],[1353,374],[1456,394],[1533,407],[1597,417],[1656,424]],function(p){return p;},'#1010f0',1.8);
/* candles */
m+=candles(left,z10)+candles(mid,z9)+candles(right,z7);
/* left MAs */
m+=line([[7,503],[87,540],[143,563],[171,575]],function(p){return p;},'#00e000',1.6);
m+=line([[245,0],[320,35],[400,70],[480,105],[530,132],[590,165],[650,195],[690,230],[730,265],[790,285],[850,293],[910,295],[950,303],[1000,312],[1060,313],[1122,316],[1200,316],[1300,320],[1440,327],[1512,331]],z10,'#00e000',1.6);
m+=line([[19,367],[61,350],[100,343],[148,340],[190,336],[232,333],[274,330],[316,322],[358,315],[400,303],[442,295],[484,285],[526,277],[568,270],[616,258],[656,245],[700,245],[742,248],[782,253],[824,255],[866,260],[908,270],[950,275],[992,272],[1034,268],[1076,263],[1122,258],[1164,255],[1206,263],[1248,272],[1290,285],[1332,298],[1374,312],[1416,325],[1458,338],[1508,354]],z10,'#e000e0',1.6);
m+=line([[19,322],[61,303],[100,299],[148,298],[190,303],[232,298],[274,294],[316,303],[358,290],[400,272],[442,268],[484,264],[526,258],[568,230],[616,208],[656,192],[700,195],[742,190],[782,207],[824,230],[866,250],[908,268],[950,285],[992,308],[1034,328],[1076,333],[1122,325],[1164,318],[1206,315],[1248,318],[1290,326],[1332,330],[1374,337],[1416,345],[1458,352],[1508,380]],z10,'#dcdc00',1.6);
m+=line([[19,300],[61,260],[100,240],[140,245],[180,265],[225,295],[270,335],[316,368],[360,320],[400,272],[445,215],[490,175],[526,150],[568,132],[616,140],[656,148],[700,200],[745,240],[782,295],[824,330],[866,360],[908,355],[950,350],[992,335],[1034,328],[1076,305],[1122,295],[1164,288],[1206,292],[1248,297],[1290,342],[1332,368],[1374,385],[1416,397],[1458,405],[1500,412]],z10,'#dcdcdc',1.4);
/* mid + right MAs */
m+=line([[385,490],[470,482],[570,478],[720,465],[880,450],[1020,433],[1170,420],[1330,420],[1430,407],[1500,392],[1560,370]],z9,'#00e000',1.6);
m+=line([[140,1455],[280,1395],[440,1310],[570,1262],[700,1210],[800,1185],[930,1155],[1000,1135],[1100,1122],[1322,1078]],z7,'#00e000',1.6);
m+=line([[460,490],[510,475],[600,435],[700,385],[780,350],[870,320],[940,290],[1030,245],[1070,238],[1170,230],[1260,210],[1340,215],[1420,198]],z9,'#e000e0',1.6);
m+=line([[60,1275],[130,1260],[170,1235],[220,1180],[290,1125],[350,1040],[440,925],[500,878],[600,825],[660,785],[750,720],[850,695],[910,695],[970,720],[1050,805],[1100,850],[1170,920],[1250,1010],[1290,1040],[1322,1058]],z7,'#c800c8',1.6);
m+=line([[255,490],[310,458],[370,438],[420,395],[510,340],[600,278],[690,278],[780,250],[840,235],[870,240],[960,230],[1010,210],[1100,198],[1146,187],[1200,190],[1300,183],[1430,180]],z9,'#e0e000',1.6);
m+=line([[70,1258],[100,1255],[140,1232],[180,1180],[240,1060],[300,970],[350,840],[410,680],[450,575],[490,510],[535,485],[590,512],[645,538],[695,540],[770,650],[810,730],[850,815],[890,875],[930,915],[985,980],[1045,1060],[1090,1125],[1130,1155],[1200,1187],[1260,1187],[1322,1208]],z7,'#d8d800',1.6);
m+=line([[195,490],[240,430],[280,370],[330,320],[410,303],[470,314],[540,295],[600,238],[690,245],[750,215],[820,228],[870,240],[960,240],[1020,205],[1100,155],[1146,138],[1210,148],[1280,190],[1340,215],[1420,230]],z9,'#dcdcdc',1.4);
m+=line([[60,1305],[100,1265],[140,1180],[180,1060],[215,910],[260,760],[300,660],[335,530],[375,470],[415,462],[454,390],[493,343],[530,430],[570,510],[610,590],[650,690],[700,740],[770,800],[810,870],[850,940],[890,1020],[930,1070],[968,1110],[1000,1140],[1045,1170],[1085,1215],[1124,1243],[1206,1228],[1246,1190],[1285,1168],[1322,1175]],z7,'#dcdcdc',1.4);
/* high marker */
m+='<path d="M1324 99 L1341 104 M1324 99 l5 -2 M1324 99 l4 3" fill="none" stroke="#b0b0b0" stroke-width="1"/>';
m+='<text x="1345" y="112" fill="#c0c0c0">24.48</text>';
/* top-right chart controls */
m+='<path d="M1668 76 L1675 83 L1668 90 L1661 83 Z" fill="none" stroke="#707070" stroke-width="1.2"/>';
m+='<rect x="1689" y="76" width="16" height="14" rx="2" fill="#1a1a1a" stroke="#808080" stroke-width="1.4"/><rect x="1697" y="79" width="5" height="8" fill="#a0a0a0"/>';
/* bottom event flags */
m+='<rect x="860" y="752" width="17" height="10" fill="#101060"/><text x="862" y="762" font-size="11" fill="#6aa0ff">财</text>';
m+='<rect x="1268" y="752" width="18" height="10" fill="#701010"/><text x="1270" y="762" font-size="11" fill="#ffd0a0">涨</text>';
m+='<rect x="1314" y="752" width="18" height="10" fill="#705010"/><text x="1316" y="762" font-size="11" fill="#ffe0b0">跌</text>';
document.getElementById('main').innerHTML=m;

var s='';
s+='<defs><linearGradient id="pb" x1="0" x2="1" y1="0" y2="0"><stop offset="0" stop-color="#4a00c8"/><stop offset="0.5" stop-color="#9c00ff"/><stop offset="1" stop-color="#4a00c8"/></linearGradient></defs>';
function box(x0,x1,y0,y1,c,f){var a=f([x0,y0]),b=f([x1,y1]);return '<rect x="'+a[0].toFixed(1)+'" y="'+a[1].toFixed(1)+'" width="'+(b[0]-a[0]).toFixed(1)+'" height="'+(b[1]-a[1]).toFixed(1)+'" fill="'+c+'"/>';}
/* magenta line sits behind the bars */
s+='<polyline points="7,1222.5 1264,1222.5 '+pts([[300,1180],[310,1000],[320,780],[340,525],[415,525],[435,270],[460,147],[495,147],[510,510],[515,750],[520,1000],[530,1210],[533,1328],[1325,1328]],z8)+'" fill="none" stroke="#ff00ff" stroke-width="2.6"/>';
/* bars below zero, first four groups */
[[2,22,153],[24,47,153],[49,71,153],[76,98,153],[198,220,158],[223,245,158],[247,269,158],[272,294,158],[296,318,158],[321,343,162],[348,370,162],[372,394,162],[617,640,166],[644,666,166],[669,691,166],[1237,1260,180],[1262,1284,180],[1286,1308,180],[1311,1333,180],[1335,1357,180],[1360,1382,185],[1385,1407,185],[1409,1431,185],[1433,1455,185],[1460,1482,185],[1485,1507,185],[1509,1531,185],[1534,1556,185]].forEach(function(b){s+=box(b[0],b[1],54,b[2],'#ff0000',z12);});
/* spike group */
s+=box(80,115,1330,1468,'#ff0000',z8)+box(119,154,1330,1473,'#ff0000',z8)+box(158,193,1330,1477,'#ff0000',z8);
s+=box(197,233,1332,1432,'#ffffff',z8)+box(197,233,1432,1481,'#ff0000',z8)+box(240,276,1332,1432,'#ffffff',z8)+box(240,276,1432,1481,'#ff0000',z8)+box(280,315,1330,1481,'#ff0000',z8);
s+=box(182,292,1230,1332,'#36009c',z8)+box(197,233,1230,1332,'url(#pb)',z8)+box(240,276,1230,1332,'url(#pb)',z8);
s+=box(323,350,528,792,'#ff0000',z8)+box(319,355,793,1332,'#0000ff',z8);
s+=box(362,389,528,1058,'#ff0000',z8)+box(358,393,1058,1332,'#00ff00',z8);
s+=box(401,428,528,1058,'#ff0000',z8)+box(397,432,1058,1332,'#00ff00',z8);
s+=box(441,468,150,738,'#ff0000',z8)+box(436,471,738,1332,'#ffff00',z8);
s+=box(480,507,150,932,'#ff0000',z8)+box(476,511,932,1332,'#00ff00',z8);
s+=box(1308,1342,1330,1336,'#ff0000',z8);
/* axis */
s+='<line x1="1711" x2="1711" y1="766" y2="1282" stroke="#b00000" stroke-width="2.4"/>';
[['16.00',796],['14.00',850],['12.00',903],['10.00',957],['8.00',1009],['6.00',1063],['4.00',1117],['2.00',1169]].forEach(function(a){
  s+='<line x1="1712" x2="1720" y1="'+a[1]+'" y2="'+a[1]+'" stroke="#b00000" stroke-width="1.4"/>';
  s+='<text x="1773" y="'+(a[1]+7)+'" text-anchor="end" fill="#e01818">'+a[0]+'</text>';
});
[823,1038,1090,1143,1196].forEach(function(y){s+='<line x1="1712" x2="1717" y1="'+y+'" y2="'+y+'" stroke="#b00000" stroke-width="1.2"/>';});
s+='<rect x="1713" y="877" width="73" height="22" fill="#000090" stroke="#6070a0"/><text x="1714" y="894.5" fill="#c0c8e0">12.13</text>';
s+='<text x="1277" y="939" fill="#e8e800">抓</text>';
s+='<text x="1231" y="1196" fill="#ffffff">准备→</text>';
document.getElementById('sub').innerHTML=s;
</script>
</body>
</html>
